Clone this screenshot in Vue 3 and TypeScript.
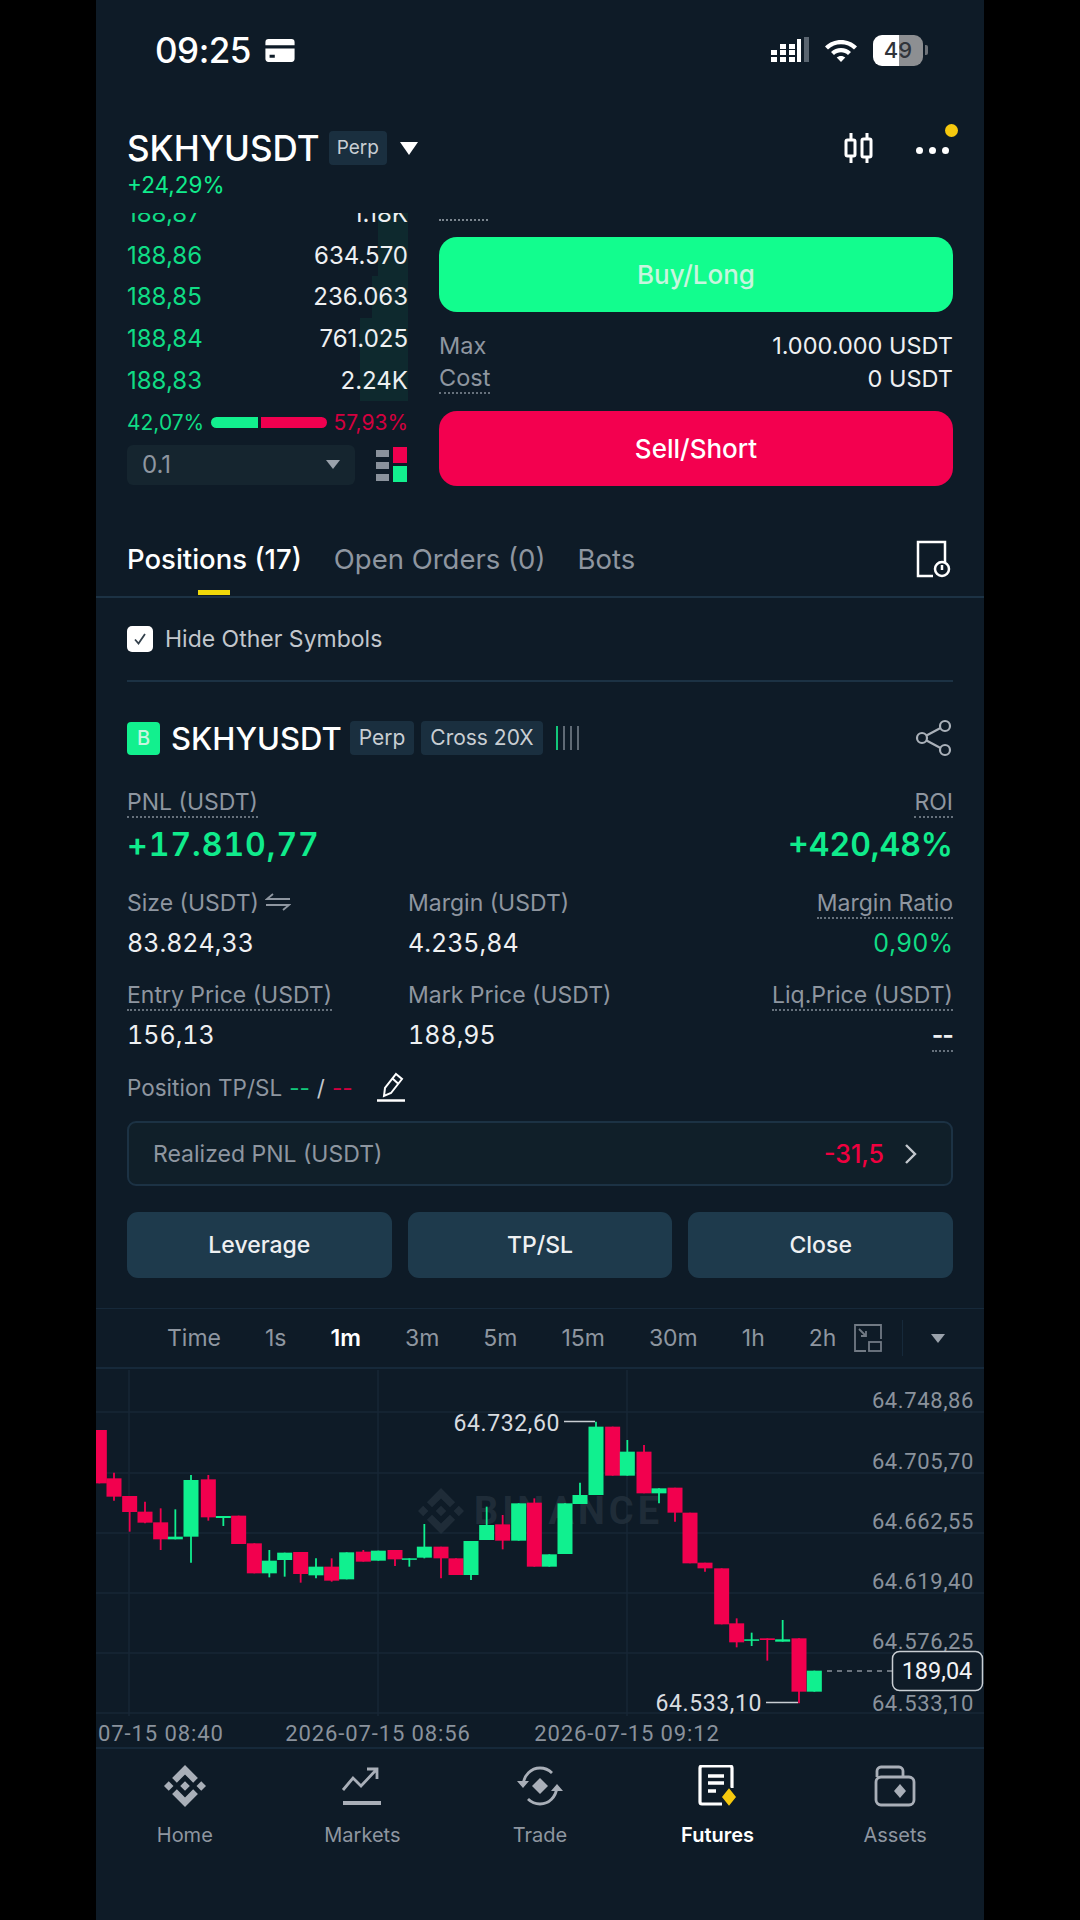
<script setup lang="ts">
import { computed } from 'vue'

type Candle = [number, number, number, number?, number?]

const bookRows = [
  { price: '188,87', size: '1.18K', depth: 30 },
  { price: '188,86', size: '634.570', depth: 30 },
  { price: '188,85', size: '236.063', depth: 36 },
  { price: '188,84', size: '761.025', depth: 48 },
  { price: '188,83', size: '2.24K', depth: 48 },
]

const stats = [
  { label: 'Size (USDT)', value: '83.824,33', swap: true },
  { label: 'Margin (USDT)', value: '4.235,84' },
  { label: 'Margin Ratio', value: '0,90%', dotted: true, end: true, green: true },
  { label: 'Entry Price (USDT)', value: '156,13', dotted: true },
  { label: 'Mark Price (USDT)', value: '188,95' },
  { label: 'Liq.Price (USDT)', value: '--', dotted: true, end: true },
]

const frames = ['Time', '1s', '1m', '3m', '5m', '15m', '30m', '1h', '2h']
const navItems = ['Home', 'Markets', 'Trade', 'Futures', 'Assets']
const priceLabels: [string, number][] = [
  ['64.748,86', 1400],
  ['64.705,70', 1461],
  ['64.662,55', 1521],
  ['64.619,40', 1581],
  ['64.576,25', 1641],
  ['64.533,10', 1703],
]
const gridY = [1412, 1473, 1533, 1593, 1653, 1713]
const gridX = [129, 378, 627]

// read off the zoomed crops: centre x, open, close, wick top, wick bottom (crop px, 3x)
const redLeft: Candle[] = [
  [10, 360, 520], [54, 505, 560, 488, 572], [101, 558, 606, 558, 665], [147, 605, 638, 575, 640],
  [194, 637, 688, 595, 720], [337, 508, 622, 495, 632], [428, 617, 702], [475, 700, 790],
  [614, 726, 792, 726, 818], [707, 770, 812, 745, 815], [802, 725, 755, 720, 755], [897, 720, 748, 720, 768],
  [1035, 710, 745, 710, 805], [1080, 745, 795], [1220, 643, 692, 615, 718], [1315, 578, 770, 565, 770],
]
const greenLeft: Candle[] = [
  [238, 680, 688, 598, 688], [285, 510, 680, 495, 758], [382, 618, 624, 618, 648], [520, 752, 790, 720, 802],
  [566, 728, 750, 728, 800], [660, 770, 796, 745, 805], [752, 727, 808], [847, 722, 752],
  [940, 745, 748, 745, 770], [985, 710, 743, 642, 745], [1125, 693, 795, 693, 810], [1172, 645, 690, 590, 690],
  [1268, 580, 692],
]
const redRight: Candle[] = [
  [218, 350, 497], [312, 425, 550, 405, 550], [405, 533, 608, 533, 635], [450, 608, 760],
  [495, 758, 775, 758, 785], [545, 775, 943], [590, 940, 997, 925, 1012], [682, 985, 990, 985, 1052],
  [777, 985, 1145, 985, 1180],
]
const greenRight: Candle[] = [
  [28, 733, 770], [75, 580, 732], [120, 555, 582, 518, 582], [168, 350, 555, 335, 555],
  [262, 425, 497, 390, 497], [357, 535, 550, 535, 580], [635, 988, 992, 968, 1008],
  [728, 988, 995, 930, 995], [823, 1082, 1145],
]

const toChart = (list: Candle[], originX: number) =>
  list.map(([x, top, bottom, wickTop, wickBottom]) => ({
    x: originX + x / 3,
    y: 1310 + top / 3,
    h: Math.max((bottom - top) / 3, 1.5),
    wt: 1310 + (wickTop ?? top) / 3,
    wb: 1310 + (wickBottom ?? bottom) / 3,
  }))

const redCandles = computed(() => [...toChart(redLeft, 96), ...toChart(redRight, 540)])
const greenCandles = computed(() => [...toChart(greenLeft, 96), ...toChart(greenRight, 540)])

const binance = 'M38.73 53.2l24.59-24.58 24.6 24.6 14.3-14.31L63.32 0 24.43 38.9l14.3 14.3zM0 63.31l14.3-14.31 14.31 14.31-14.31 14.3zM38.73 73.41l24.59 24.59 24.6-24.6 14.31 14.29-38.9 38.91-38.91-38.88v-.03l14.31-14.28zM98 63.31l14.3-14.31 14.31 14.3-14.31 14.32zM77.83 63.3L63.32 48.78 52.59 59.51l-1.24 1.23-2.54 2.54 14.51 14.5 14.51-14.47z'
</script>

<template>
  <div class="page">
    <div class="screen">
      <div class="status">
        <div class="status-left">
          <span class="clock">09:25</span>
          <svg width="32" height="25" viewBox="0 0 30 24"><path fill="#fff" d="M4 1h22a3 3 0 0 1 3 3v3H1V4a3 3 0 0 1 3-3zM1 10h28v10a3 3 0 0 1-3 3H4a3 3 0 0 1-3-3zM5 16v3h5v-3z" /></svg>
        </div>
        <div class="status-right">
          <svg width="38" height="26" viewBox="0 0 38 26" fill="#fff">
            <rect x="0" y="13" width="6" height="5" /><rect x="0" y="20" width="6" height="5" />
            <rect x="9" y="7" width="6" height="5" /><rect x="9" y="13" width="6" height="5" /><rect x="9" y="20" width="6" height="5" />
            <rect x="18" y="7" width="6" height="5" /><rect x="18" y="13" width="6" height="5" /><rect x="18" y="20" width="6" height="5" />
            <rect x="26" y="2" width="4" height="23" /><rect x="33" y="0" width="5" height="25" fill="#5a6570" />
          </svg>
          <svg width="34" height="26" viewBox="0 0 34 26"><path fill="#fff" d="M17 3c6 0 11.700 2.300 16 6.400l-3 3.100C26.500 9.200 22 7.300 17 7.300S7.500 9.200 4 12.500l-3-3.100C5.300 5.300 11 3 17 3zm0 8c3.800 0 7.300 1.400 10 3.900l-3 3.100c-1.900-1.700-4.300-2.700-7-2.700s-5.100 1-7 2.700l-3-3.100C9.700 12.400 13.200 11 17 11zm0 8c1.700 0 3.200.6 4.300 1.600L17 25l-4.300-4.400c1.100-1 2.600-1.600 4.300-1.600z" /></svg>
          <div class="battery"><span>49</span></div>
          <i class="battery-cap"></i>
        </div>
      </div>

      <header class="head">
        <div class="head-row">
          <div class="head-title">
            <span class="symbol">SKHYUSDT</span>
            <span class="chip head-chip">Perp</span>
            <i class="caret"></i>
          </div>
          <div class="head-icons">
            <svg width="34" height="34" viewBox="0 0 34 34" fill="none" stroke="#fff" stroke-width="3">
              <path d="M9 2v6M9 26v6M25 2v6M25 26v6" /><rect x="4" y="9" width="9" height="16" rx="1.500" /><rect x="20" y="8" width="9" height="18" rx="1.500" />
            </svg>
            <div class="more">
              <i></i><i></i><i></i>
              <b class="notify"></b>
            </div>
          </div>
        </div>
        <div class="change">+24,29%</div>
      </header>

      <section class="trade">
        <div class="book">
          <div class="book-rows">
            <div v-for="row in bookRows" :key="row.price" class="book-row">
              <span class="depth" :style="{ width: row.depth + 'px' }"></span>
              <span class="bid">{{ row.price }}</span>
              <span class="qty">{{ row.size }}</span>
            </div>
          </div>
          <div class="ratio">
            <span class="bid-pct">42,07%</span>
            <div class="ratio-bar"><i class="ratio-g"></i><i class="ratio-r"></i></div>
            <span class="ask-pct">57,93%</span>
          </div>
          <div class="book-foot">
            <div class="select"><span>0.1</span><i class="small-caret"></i></div>
            <svg width="32" height="36" viewBox="0 0 32 36">
              <rect x="0" y="3" width="13" height="7" fill="#8a929c" /><rect x="0" y="15" width="13" height="7" fill="#8a929c" /><rect x="0" y="27" width="13" height="7" fill="#8a929c" />
              <rect x="17" y="0" width="14" height="16" fill="#f0004f" /><rect x="17" y="19" width="14" height="16" fill="#12f08e" />
            </svg>
          </div>
        </div>
        <div class="order">
          <div class="dots-top"></div>
          <button class="action buy">Buy/Long</button>
          <div class="order-line first"><span>Max</span><em>1.000.000 USDT</em></div>
          <div class="order-line"><span class="dotted">Cost</span><em>0 USDT</em></div>
          <button class="action sell">Sell/Short</button>
        </div>
      </section>

      <nav class="tabs">
        <span class="tab on">Positions (17)</span>
        <span class="tab">Open Orders (0)</span>
        <span class="tab">Bots</span>
        <svg class="tab-icon" width="36" height="38" viewBox="0 0 36 38" fill="none" stroke="#fff" stroke-width="2.500">
          <path d="M18 36H3V2h27v20" /><circle cx="27" cy="29" r="7" /><path d="M27 25v5" />
        </svg>
      </nav>

      <div class="filter">
        <span class="check"><svg width="18" height="18" viewBox="0 0 18 18" fill="none" stroke="#33404c" stroke-width="1.800"><path d="M4 9.500l3.500 4L14 4" /></svg></span>
        <span>Hide Other Symbols</span>
      </div>

      <section class="position">
        <div class="pos-head">
          <span class="side">B</span>
          <span class="pos-symbol">SKHYUSDT</span>
          <span class="chip">Perp</span>
          <span class="chip">Cross 20X</span>
          <span class="risk"><i class="lit"></i><i></i><i></i><i></i></span>
          <svg class="share" width="38" height="38" viewBox="0 0 38 38" fill="none" stroke="#aab1b9" stroke-width="2.200">
            <circle cx="30" cy="7" r="5" /><circle cx="7" cy="19" r="5" /><circle cx="30" cy="31" r="5" /><path d="M11.500 16.500l14-7.500M11.500 21.500l14 7.500" />
          </svg>
        </div>
        <div class="pnl">
          <div><span class="label dotted">PNL (USDT)</span><strong class="pnl-main">+17.810,77</strong></div>
          <div class="end"><span class="label dotted">ROI</span><strong>+420,48%</strong></div>
        </div>
        <div class="stats">
          <div v-for="item in stats" :key="item.label" class="stat" :class="{ end: item.end }">
            <span class="label" :class="{ dotted: item.dotted }">
              {{ item.label }}
              <svg v-if="item.swap" width="26" height="18" viewBox="0 0 26 18" fill="none" stroke="#8e96a0" stroke-width="1.800"><path d="M25 6H2l6-5M1 12h23l-6 5" /></svg>
            </span>
            <span class="value" :class="{ up: item.green, 'value-dash': item.value === '--' }">{{ item.value }}</span>
          </div>
        </div>
        <div class="tpsl">
          <span>Position TP/SL</span>
          <span class="g-dash">--</span><span class="slash">/</span><span class="r-dash">--</span>
          <svg width="30" height="30" viewBox="0 0 30 30" fill="none" stroke="#fff" stroke-width="2"><path d="M20 2l6 5-11 14-7 3 1-8zM16.500 6.500l5.500 5" /><path d="M1 28.500h28" stroke-width="2.500" /></svg>
        </div>
        <div class="realized">
          <span>Realized PNL (USDT)</span>
          <div class="realized-right">
            <b>-31,5</b>
            <svg width="14" height="22" viewBox="0 0 14 22" fill="none" stroke="#c2c7cd" stroke-width="2.400"><path d="M2 2l9 9-9 9" /></svg>
          </div>
        </div>
        <div class="buttons">
          <button>Leverage</button>
          <button>TP/SL</button>
          <button>Close</button>
        </div>
      </section>

      <div class="frames">
        <span v-for="frame in frames" :key="frame" :class="{ on: frame === '1m' }">{{ frame }}</span>
        <svg class="frames-icon" width="28" height="28" viewBox="0 0 28 28" fill="none" stroke="#8a929c" stroke-width="1.800">
          <path d="M12 27H1V1h26v14" /><rect x="15" y="18" width="12" height="9" /><path d="M5 5l7 7M12 7v5H7" />
        </svg>
        <i class="frames-sep"></i>
        <i class="small-caret frames-caret"></i>
      </div>

      <div class="chart">
        <svg width="888" height="378" viewBox="96 1369 888 378">
          <g stroke="#172736" stroke-width="1.500">
            <line v-for="y in gridY" :key="y" x1="96" x2="984" :y1="y" :y2="y" />
            <line v-for="x in gridX" :key="x" :x1="x" :x2="x" y1="1370" y2="1716" />
          </g>
          <g class="mark" fill="#22303c" opacity="0.85">
            <svg x="418" y="1488" width="46" height="46" viewBox="0 0 126.610 126.610"><path :d="binance" /></svg>
            <text x="474" y="1524" font-size="38" font-weight="700" letter-spacing="4">BINANCE</text>
          </g>
          <g fill="#f2004e" stroke="#f2004e">
            <g v-for="c in redCandles" :key="'r' + c.x + c.y">
              <line :x1="c.x" :x2="c.x" :y1="c.wt" :y2="c.wb" stroke-width="1.800" />
              <rect :x="c.x - 7.500" :y="c.y" width="15" :height="c.h" stroke="none" />
            </g>
          </g>
          <g fill="#10f08f" stroke="#10f08f">
            <g v-for="c in greenCandles" :key="'g' + c.x + c.y">
              <line :x1="c.x" :x2="c.x" :y1="c.wt" :y2="c.wb" stroke-width="1.800" />
              <rect :x="c.x - 7.500" :y="c.y" width="15" :height="c.h" stroke="none" />
            </g>
          </g>
          <g class="axis">
            <text v-for="p in priceLabels" :key="p[1]" x="974" :y="p[1] + 8" text-anchor="end">{{ p[0] }}</text>
          </g>
          <g class="axis axis-x">
            <text x="98" y="1741">07-15 08:40</text>
            <text x="378" y="1741" text-anchor="middle">2026-07-15 08:56</text>
            <text x="627" y="1741" text-anchor="middle">2026-07-15 09:12</text>
          </g>
          <g class="extreme">
            <text x="560" y="1431" text-anchor="end">64.732,60</text>
            <text x="762" y="1711" text-anchor="end">64.533,10</text>
          </g>
          <path d="M564 1421.500h31M766 1702.500h32" stroke="#c9ced3" stroke-width="1.500" fill="none" />
          <line x1="827" x2="892" y1="1671" y2="1671" stroke="#8a929c" stroke-width="1.500" stroke-dasharray="5 5" />
          <rect x="892.500" y="1651.500" width="90" height="39" rx="7" fill="#0e1b27" stroke="#c9ced3" stroke-width="1.500" />
          <text class="tag" x="937" y="1679" text-anchor="middle">189,04</text>
        </svg>
      </div>

      <nav class="bottom">
        <div v-for="item in navItems" :key="item" class="nav-item" :class="{ on: item === 'Futures' }">
          <svg v-if="item === 'Home'" width="42" height="42" viewBox="0 0 126.610 126.610" fill="#a9afb8"><path :d="binance" /></svg>
          <svg v-else-if="item === 'Markets'" width="42" height="42" viewBox="0 0 42 42" fill="none" stroke="#a9afb8" stroke-width="2.800">
            <path d="M2 25l10-12 8 8L35 5M26 4h10v10" /><path d="M2 38h38" stroke-width="4" />
          </svg>
          <svg v-else-if="item === 'Trade'" width="48" height="42" viewBox="0 0 48 42" fill="none" stroke="#a9afb8" stroke-width="2.800">
            <path d="M7 20C8 10 15 3 24 3c5 0 9 2 12 5M41 22c-1 10-8 17-17 17-5 0-9-2-12-5" />
            <path d="M1 16l6 7 6-7zM35 26l6-7 6 7z" fill="#a9afb8" stroke="none" />
            <path d="M24 13l8 8-8 8-8-8z" fill="#a9afb8" stroke="none" />
          </svg>
          <svg v-else-if="item === 'Futures'" width="44" height="42" viewBox="0 0 44 42" fill="none">
            <path d="M26 39H6a2 2 0 0 1-2-2V3a2 2 0 0 1 2-2h28a2 2 0 0 1 2 2v20" stroke="#fff" stroke-width="3.200" />
            <path d="M12 11h16M12 18h16M12 26h8" stroke="#fff" stroke-width="3.500" />
            <path d="M33 22l8 10-8 10-8-10z" fill="#f6c90e" stroke="#0e1b27" stroke-width="1.500" />
          </svg>
          <svg v-else width="42" height="42" viewBox="0 0 42 42" fill="none" stroke="#a9afb8" stroke-width="2.800">
            <path d="M3 12V6a4 4 0 0 1 4-4h18a4 4 0 0 1 4 4v6" />
            <rect x="2" y="12" width="38" height="28" rx="5" />
            <path d="M26 19l6 7-6 7-6-7z" fill="#a9afb8" stroke="none" />
          </svg>
          <span>{{ item }}</span>
        </div>
      </nav>
    </div>
  </div>
</template>

<style scoped>
.page {
  width: 1080px;
  height: 1920px;
  background: #000;
  display: flex;
  justify-content: center;
  font-family: Inter, 'Noto Sans', sans-serif;
  color: #fff;
}

.screen {
  width: 888px;
  height: 1920px;
  background: #0e1b27;
  overflow: hidden;
  display: flex;
  flex-direction: column;
}

.screen * {
  box-sizing: border-box;
}

i {
  display: block;
}

.status {
  height: 100px;
  flex: none;
  display: flex;
  justify-content: space-between;
  align-items: center;
  padding: 0 56px 0 59px;
}

.status-left,
.status-right {
  display: flex;
  align-items: center;
}

.status-left {
  gap: 13px;
}

.status-right {
  gap: 15px;
}

.clock {
  font-size: 35px;
  font-weight: 500;
  letter-spacing: -0.5px;
}

.battery {
  width: 50px;
  height: 31px;
  border-radius: 9px;
  background: linear-gradient(90deg, #fff 52%, #8d8f92 52%);
  color: #30343a;
  font-size: 22px;
  font-weight: 500;
  text-align: center;
  line-height: 31px;
}

.battery-cap {
  width: 3px;
  height: 10px;
  margin-left: -13px;
  background: #6d7278;
  border-radius: 0 2px 2px 0;
}

.head {
  height: 113px;
  flex: none;
  padding: 30px 31px 0;
}

.head-row {
  display: flex;
  justify-content: space-between;
  align-items: center;
  height: 36px;
}

.head-title {
  display: flex;
  align-items: center;
}

.symbol {
  font-size: 35px;
  font-weight: 500;
}

.chip {
  display: inline-block;
  background: #1a2f3f;
  border-radius: 4px;
  color: #c9ced3;
  font-size: 21px;
  padding: 0 9px;
  line-height: 34px;
}

.head-chip {
  margin-left: 9px;
  padding: 0 8px;
  font-size: 19px;
}

.caret {
  width: 0;
  height: 0;
  margin-left: 13px;
  border-left: 9px solid transparent;
  border-right: 9px solid transparent;
  border-top: 13px solid #fff;
}

.head-icons {
  display: flex;
  align-items: center;
  gap: 40px;
  padding-right: 4px;
}

.more {
  position: relative;
  display: flex;
  gap: 6px;
  padding-top: 5px;
}

.more i {
  width: 7px;
  height: 7px;
  background: #fff;
  border-radius: 50%;
}

.notify {
  position: absolute;
  right: -9px;
  top: -18px;
  width: 13px;
  height: 13px;
  border-radius: 50%;
  background: #f6c90e;
}

.change {
  margin-top: 5px;
  font-size: 22.5px;
  line-height: 28px;
  color: #10eb8c;
}

.trade {
  height: 274px;
  flex: none;
  display: flex;
  gap: 31px;
  padding: 0 31px;
  overflow: hidden;
}

.book {
  width: 281px;
  flex: none;
}

.book-rows {
  margin-top: -20px;
}

.book-row {
  position: relative;
  height: 41.6px;
  display: flex;
  justify-content: space-between;
  align-items: center;
  font-size: 24px;
}

.depth {
  position: absolute;
  right: 0;
  top: 0;
  bottom: 0;
  background: rgba(18, 120, 90, 0.16);
}

.bid,
.qty {
  position: relative;
}

.bid {
  color: #10dc85;
}

.qty {
  color: #eef0f2;
}

.ratio {
  height: 44px;
  display: flex;
  align-items: center;
  justify-content: space-between;
  font-size: 21px;
}

.bid-pct {
  color: #10dc85;
}

.ask-pct {
  color: #d3003f;
}

.ratio-bar {
  display: flex;
  gap: 3px;
  width: 116px;
}

.ratio-bar i {
  height: 11px;
}

.ratio-g {
  width: 47px;
  background: #12f08e;
  border-radius: 6px 0 0 6px;
}

.ratio-r {
  flex: 1;
  background: #f0004f;
  border-radius: 0 6px 6px 0;
}

.book-foot {
  display: flex;
  align-items: center;
  justify-content: space-between;
}

.select {
  width: 228px;
  height: 40px;
  background: #15252f;
  border-radius: 6px;
  display: flex;
  align-items: center;
  justify-content: space-between;
  padding: 0 15px;
  color: #8e96a0;
  font-size: 24px;
}

.small-caret {
  width: 0;
  height: 0;
  border-left: 7px solid transparent;
  border-right: 7px solid transparent;
  border-top: 9px solid #9aa2ab;
}

.order {
  flex: 1;
  display: flex;
  flex-direction: column;
}

.dots-top {
  width: 49px;
  margin-top: 6px;
  border-top: 2px dotted #7b858f;
}

.action {
  height: 75px;
  flex: none;
  border: 0;
  border-radius: 18px;
  font-family: inherit;
  font-size: 26px;
  font-weight: 500;
  color: #fff;
}

.buy {
  margin-top: 16px;
  background: #12fd8e;
  color: #c8f5df;
}

.sell {
  margin-top: 16px;
  background: #f3004f;
}

.order-line {
  display: flex;
  justify-content: space-between;
  align-items: center;
  height: 33px;
  font-size: 23.5px;
  color: #8e96a0;
}

.order-line.first {
  margin-top: 17px;
}

.order-line em {
  font-style: normal;
  color: #eef0f2;
}

.label {
  border-bottom: 2px solid transparent;
}

.dotted,
.label.dotted {
  border-bottom: 2px dotted #66717c;
}

.tabs {
  height: 70px;
  flex: none;
  margin-top: 41px;
  padding: 0 33px 6px 31px;
  border-bottom: 2px solid #1c3244;
  display: flex;
  align-items: center;
  gap: 32px;
  font-size: 27.5px;
  color: #8e96a0;
}

.tab.on {
  position: relative;
  color: #fff;
  font-weight: 500;
}

.tab.on::after {
  content: '';
  position: absolute;
  left: 50%;
  margin-left: -16px;
  bottom: -19px;
  width: 32px;
  height: 5px;
  background: #f0d90a;
}

.tab-icon {
  margin-left: auto;
}

.filter {
  height: 84px;
  flex: none;
  margin: 0 31px;
  border-bottom: 2px solid #1c3244;
  display: flex;
  align-items: center;
  gap: 12px;
  font-size: 23px;
  color: #c2c7cd;
}

.check {
  width: 26px;
  height: 26px;
  border-radius: 5px;
  background: #fff;
  display: flex;
  align-items: center;
  justify-content: center;
}

.position {
  flex: none;
  padding: 39px 31px 0;
}

.pos-head {
  height: 34px;
  display: flex;
  align-items: center;
  gap: 7px;
}

.side {
  width: 33px;
  height: 33px;
  border-radius: 4px;
  background: #12f08e;
  color: #c8f5df;
  font-size: 20px;
  font-weight: 500;
  text-align: center;
  line-height: 33px;
}

.pos-symbol {
  margin: 0 1px 0 4px;
  font-size: 31px;
  font-weight: 500;
}

.risk {
  display: flex;
  gap: 5px;
  margin-left: 6px;
}

.risk i {
  width: 2px;
  height: 24px;
  background: #5f6a75;
}

.risk .lit {
  background: #12c77a;
}

.share {
  margin-left: auto;
}

.pnl {
  display: flex;
  justify-content: space-between;
  margin-top: 33px;
}

.pnl > div {
  display: flex;
  flex-direction: column;
  align-items: flex-start;
}

.pnl > .end,
.stat.end {
  align-items: flex-end;
}

.pnl strong {
  margin-top: 7px;
  font-size: 32px;
  line-height: 40px;
  font-weight: 600;
  color: #10eb8c;
  font-variant-numeric: tabular-nums;
}

.pnl .pnl-main {
  letter-spacing: 1px;
}

.label {
  font-size: 23px;
  line-height: 28px;
  color: #8e96a0;
}

.stats {
  display: grid;
  grid-template-columns: 281px 1fr auto;
  row-gap: 16px;
  margin-top: 24px;
}

.stat {
  display: flex;
  flex-direction: column;
  align-items: flex-start;
  height: 76px;
}

.value {
  margin-top: 9px;
  font-size: 25px;
  line-height: 30px;
  color: #eef0f2;
  font-variant-numeric: tabular-nums;
}

.value.up {
  color: #10dc85;
}

.value-dash {
  border-bottom: 2px dotted #66717c;
  font-variant-numeric: normal;
  font-weight: 600;
  letter-spacing: -1px;
}

.tpsl {
  margin-top: 13px;
  height: 34px;
  display: flex;
  align-items: center;
  gap: 7px;
  font-size: 22.5px;
  color: #8e96a0;
}

.g-dash {
  color: #12c77a;
}

.r-dash {
  color: #d3003f;
}

.slash {
  color: #c2c7cd;
}

.tpsl svg {
  margin-left: 16px;
}

.realized {
  height: 65px;
  margin-top: 17px;
  padding: 0 33px 0 24px;
  border: 2px solid #1c3244;
  border-radius: 9px;
  background: #101f29;
  display: flex;
  justify-content: space-between;
  align-items: center;
  font-size: 23px;
  color: #8e96a0;
}

.realized-right {
  display: flex;
  align-items: center;
  gap: 20px;
}

.realized-right b {
  font-size: 25px;
  font-weight: 500;
  color: #f0003f;
}

.buttons {
  display: flex;
  gap: 16px;
  margin-top: 26px;
}

.buttons button {
  flex: 1;
  height: 66px;
  border: 0;
  border-radius: 11px;
  background: #1e3a4c;
  color: #eef0f2;
  font-family: inherit;
  font-size: 23px;
  font-weight: 500;
}

.frames {
  height: 61px;
  flex: none;
  margin-top: 30px;
  border-top: 1px solid #16293a;
  border-bottom: 2px solid #16293a;
  display: flex;
  align-items: center;
  gap: 44px;
  padding-left: 71px;
  font-size: 23px;
  color: #8e96a0;
}

.frames .on {
  color: #fff;
  font-weight: 600;
}

.frames-icon {
  margin-left: -26px;
  opacity: 0.8;
}

.frames-sep {
  width: 1px;
  height: 36px;
  margin-left: -24px;
  background: #16293a;
}

.frames-caret {
  margin-left: -16px;
}

.chart {
  height: 378px;
  flex: none;
}

.chart svg {
  display: block;
}

.mark text,
.axis text {
  font-family: Roboto, sans-serif;
}

.axis text {
  font-size: 22px;
  letter-spacing: 0.6px;
  fill: #8a929c;
}

.axis-x text {
  letter-spacing: 0.9px;
}

.extreme text {
  font-family: Roboto, sans-serif;
  font-size: 23px;
  letter-spacing: 0.6px;
  fill: #d8dce0;
}

.tag {
  font-family: Roboto, sans-serif;
  font-size: 23.5px;
  fill: #f2f3f5;
}

.bottom {
  flex: none;
  border-top: 2px solid #16293a;
  display: grid;
  grid-template-columns: repeat(5, 1fr);
  padding: 16px 0 0;
}

.nav-item {
  display: flex;
  flex-direction: column;
  align-items: center;
  gap: 16px;
  font-size: 20px;
  color: #8e96a0;
}

.nav-item svg {
  height: 42px;
}

.nav-item.on {
  color: #fff;
  font-weight: 600;
}
</style>
